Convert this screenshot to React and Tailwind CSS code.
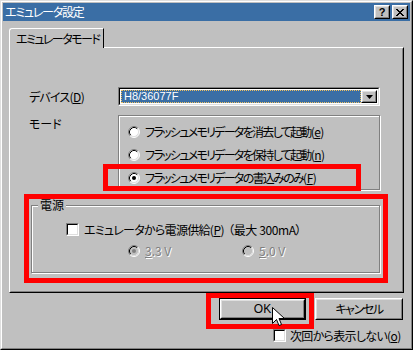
import React from 'react';

function Radio({ checked = false, disabled = false }) {
  return (
    <svg width="12" height="12" viewBox="0 0 12 12" className="shrink-0">
      <circle cx="6" cy="6" r="5" fill={disabled ? '#c0c0c0' : '#fff'} />
      <path d="M2.11 9.89 A5.5 5.5 0 0 1 9.89 2.11" fill="none" stroke="#808080" />
      <path d="M9.89 2.11 A5.5 5.5 0 0 1 2.11 9.89" fill="none" stroke="#fff" />
      <path d="M2.82 9.18 A4.5 4.5 0 0 1 9.18 2.82" fill="none" stroke="#000" />
      <path d="M9.18 2.82 A4.5 4.5 0 0 1 2.82 9.18" fill="none" stroke="#dfdfdf" />
      {checked && <circle cx="6" cy="6" r="2" fill={disabled ? '#808080' : '#000'} />}
    </svg>
  );
}

function Checkbox() {
  return (
    <span className="block h-[13px] w-[13px] shrink-0 border border-t-[#808080] border-l-[#808080] border-r-white border-b-white">
      <span className="block h-full w-full border border-t-black border-l-black border-r-[#dfdfdf] border-b-[#dfdfdf] bg-white" />
    </span>
  );
}

function Raised({ className = '', children }) {
  return (
    <div className={`border border-t-white border-l-white border-r-black border-b-black ${className}`}>
      <div className="flex h-full w-full items-center justify-center border border-t-[#dfdfdf] border-l-[#dfdfdf] border-r-[#808080] border-b-[#808080] bg-[#c0c0c0]">
        {children}
      </div>
    </div>
  );
}

function Disabled({ children }) {
  return (
    <span className="text-[#808080] [text-shadow:1px_1px_0_#fff]">{children}</span>
  );
}

// label + accelerator key, e.g. 起動(e)
function Accel({ text, k, className = '' }) {
  return (
    <span>
      <span className={className}>{text}</span>
      <span className="tracking-[-0.5px]">
        (<span className="underline">{k}</span>)
      </span>
    </span>
  );
}

export default function App() {
  return (
    <div className="relative h-[350px] w-[413px] overflow-hidden whitespace-nowrap bg-[#c0c0c0] font-['Noto_Sans_CJK_JP',sans-serif] text-[12px] leading-none text-black [font-feature-settings:'palt']">
      <div className="h-full border border-t-[#dfdfdf] border-l-[#dfdfdf] border-r-black border-b-black">
        <div className="flex h-full flex-col border border-t-white border-l-white border-r-[#808080] border-b-[#808080] p-px">
          {/* Title bar */}
          <div className="flex h-[18px] items-center bg-[#3a6ea5] pl-[2px] pr-[2px] text-white">
            <span className="tracking-[-1.2px]">エミュレータ設定</span>
            <div className="ml-auto flex gap-[2px]">
              <Raised className="h-[14px] w-[16px]">
                <span className="font-['Liberation_Sans',sans-serif] text-[11px] font-bold text-black">?</span>
              </Raised>
              <Raised className="h-[14px] w-[16px]">
                <svg width="8" height="7" viewBox="0 0 8 7">
                  <path d="M0 0h2v1h1v1h2V1h1V0h2v1H7v1H6v1H5v1h1v1h1v1h1v1H6V6H5V5H3v1H2v1H0V6h1V5h1V4h1V3H2V2H1V1H0z" fill="#000" />
                </svg>
              </Raised>
            </div>
          </div>

          {/* Body */}
          <div className="flex flex-1 flex-col px-[6px] pt-[7px]">
            {/* Tab */}
            <div className="relative z-10 -mb-px flex h-[20px] w-[95px] items-center rounded-tl-[3px] border border-b-0 border-t-white border-l-white border-r-black bg-[#c0c0c0] pl-[6px]">
              <span className="tracking-[-1.5px]">エミュレータモード</span>
            </div>

            {/* Panel */}
            <div className="h-[246px] border border-t-white border-l-white border-r-black border-b-black">
              <div className="h-full border border-t-transparent border-l-transparent border-r-[#808080] border-b-[#808080] pl-[18px] pt-[38px]">
                {/* Device */}
                <div className="flex items-center">
                  <span className="w-[89px]">
                    <Accel text="デバイス" k="D" className="tracking-[-0.8px]" />
                  </span>
                  <div className="h-[19px] w-[262px] border border-t-[#808080] border-l-[#808080] border-r-white border-b-white">
                    <div className="flex h-full border border-t-black border-l-black border-r-[#dfdfdf] border-b-[#dfdfdf] bg-white p-px">
                      <div className="flex flex-1 items-center border border-dotted border-[#f0c060] bg-[#3a6ea5] pl-[2px] font-['Liberation_Sans',sans-serif] text-[11px] text-white">
                        H8/36077F
                      </div>
                      <Raised className="h-full w-[16px]">
                        <svg width="7" height="4" viewBox="0 0 7 4">
                          <path d="M0 0h7L3.5 4z" fill="#000" />
                        </svg>
                      </Raised>
                    </div>
                  </div>
                </div>

                {/* Mode */}
                <div className="mt-[9px] flex">
                  <span className="w-[89px] pt-[3px]">モード</span>
                  <div className="flex h-[75px] w-[262px] flex-col gap-[11px] border border-[#808080] pl-[9px] pt-[10px] shadow-[inset_1px_1px_0_#fff,1px_1px_0_#fff]">
                    <div className="flex h-[12px] items-center gap-[5px]">
                      <Radio />
                      <Accel text="フラッシュメモリデータを消去して起動" k="e" className="tracking-[-1.7px]" />
                    </div>
                    <div className="flex h-[12px] items-center gap-[5px]">
                      <Radio />
                      <Accel text="フラッシュメモリデータを保持して起動" k="n" className="tracking-[-1.7px]" />
                    </div>
                    <div className="flex h-[12px] items-center gap-[5px]">
                      <Radio checked />
                      <Accel text="フラッシュメモリデータの書込みのみ" k="F" className="tracking-[-1.7px]" />
                    </div>
                  </div>
                </div>

                {/* Power */}
                <div className="relative ml-[2px] mt-[15px] h-[68px] w-[349px] border border-[#808080] shadow-[inset_1px_1px_0_#fff,1px_1px_0_#fff]">
                  <span className="absolute -top-[7px] left-[6px] bg-[#c0c0c0] px-[2px]">電源</span>
                  <div className="flex flex-col pl-[34px] pt-[17px]">
                    <div className="flex items-center gap-[5px]">
                      <Checkbox />
                      <span>
                        <Accel text="エミュレータから電源供給" k="P" className="tracking-[-0.7px]" />
                        <span className="ml-[4px] tracking-[-0.4px]">（最大 300mA）</span>
                      </span>
                    </div>
                    <div className="mt-[9px] flex items-center pl-[62px]">
                      <div className="flex w-[114px] items-center gap-[5px]">
                        <Radio checked disabled />
                        <Disabled>
                          <span className="underline">3</span>.3 V
                        </Disabled>
                      </div>
                      <div className="flex items-center gap-[5px]">
                        <Radio disabled />
                        <Disabled>
                          <span className="underline">5</span>.0 V
                        </Disabled>
                      </div>
                    </div>
                  </div>
                </div>
              </div>
            </div>

            {/* Buttons */}
            <div className="mt-[5px] flex justify-end gap-[9px] pr-[1px]">
              <div className="h-[22px] w-[87px] border border-black">
                <Raised className="h-full w-full">
                  <span className="font-['Liberation_Sans',sans-serif]">OK</span>
                </Raised>
              </div>
              <Raised className="h-[22px] w-[88px]">
                <span className="tracking-[-1.4px]">キャンセル</span>
              </Raised>
            </div>
            <div className="mt-[9px] flex items-center gap-[4px] pl-[264px]">
              <Checkbox />
              <Accel text="次回から表示しない" k="o" className="tracking-[-0.7px]" />
            </div>
          </div>
        </div>
      </div>

      {/* Annotation boxes */}
      <div className="absolute left-[103px] top-[164px] h-[27px] w-[258px] border-[5px] border-[#ff0000]" />
      <div className="absolute left-[24px] top-[194px] h-[89px] w-[364px] border-[5px] border-[#ff0000]" />
      <div className="absolute left-[206px] top-[293px] h-[36px] w-[108px] border-[5px] border-[#ff0000]" />

      {/* Mouse cursor */}
      <svg className="absolute left-[272px] top-[307px]" width="13" height="20" viewBox="0 0 13 20">
        <path d="M0.5 0.5V16.5L4.5 12.5L7 18.5L9.5 17.5L7 11.5H12.5Z" fill="#fff" stroke="#000" strokeLinejoin="miter" />
      </svg>
    </div>
  );
}
